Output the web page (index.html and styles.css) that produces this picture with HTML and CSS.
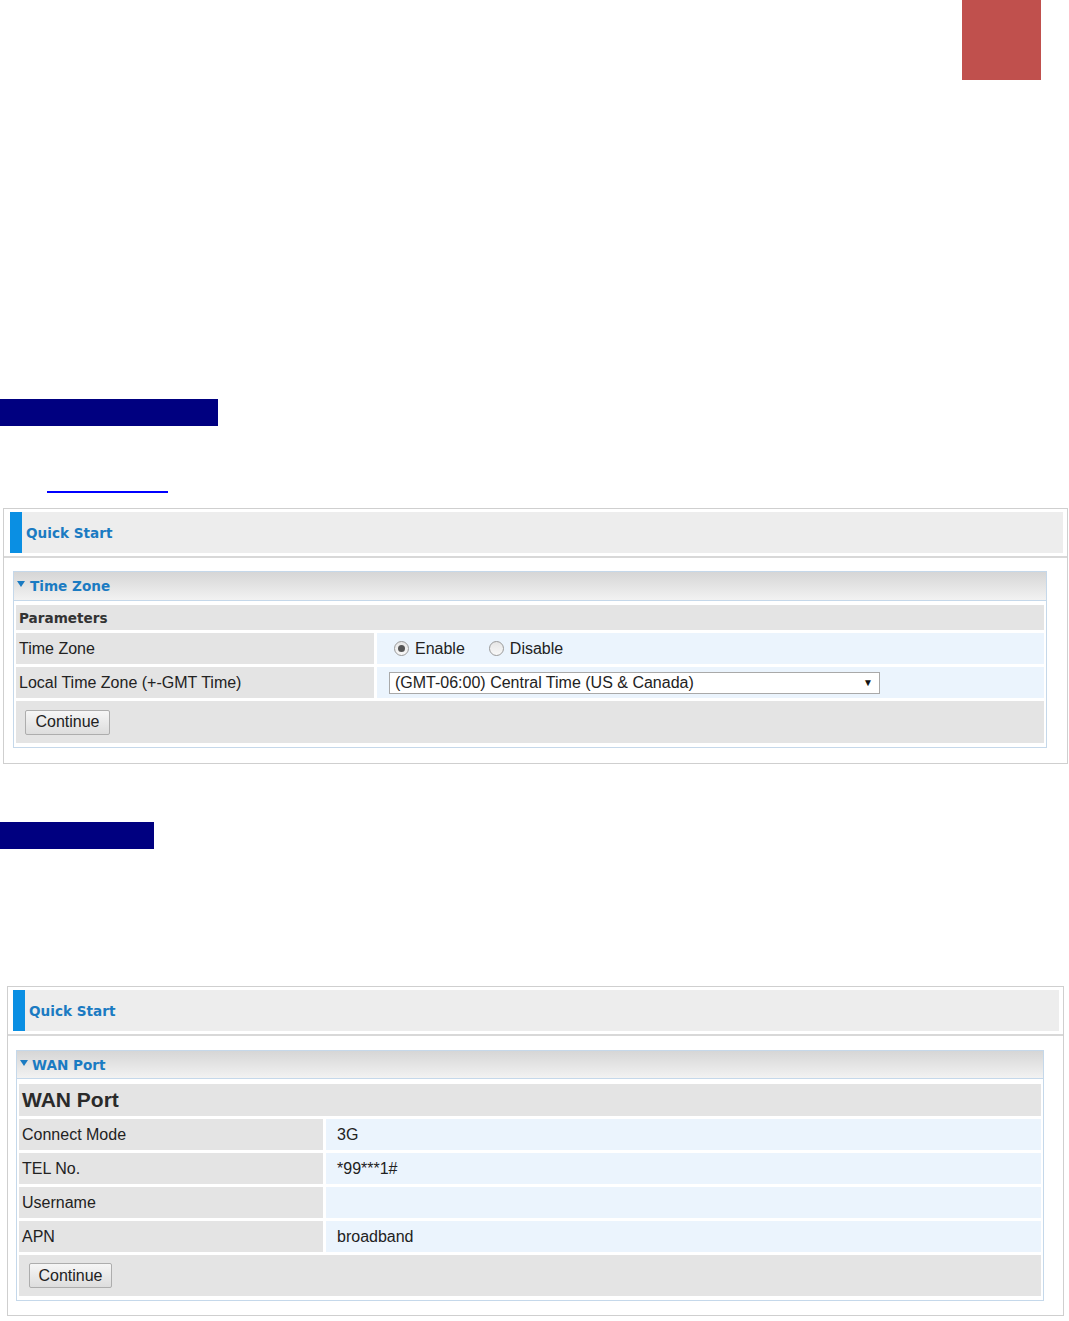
FILE: index.html
```html
<!DOCTYPE html>
<html>
<head>
<meta charset="utf-8">
<link rel="stylesheet" href="styles.css">
</head>
<body>
<div class="red-tab"></div>
<div class="navy-bar navy-1"></div>
<div class="link-line"></div>

<div class="panel panel-1">
  <div class="panel-head"><div class="qs-bar">Quick Start</div></div>
  <div class="panel-body">
    <div class="section">
      <div class="section-head"><span class="tri"></span>Time Zone</div>
      <div class="section-body">
        <div class="grid grid-tz">
          <div class="cell params">Parameters</div>
          <div class="cell label">Time Zone</div>
          <div class="cell value">
            <span class="radio checked"></span><span class="radio-text">Enable</span>
            <span class="radio"></span><span class="radio-text">Disable</span>
          </div>
          <div class="cell label">Local Time Zone (+-GMT Time)</div>
          <div class="cell value">
            <div class="select"><span>(GMT-06:00) Central Time (US &amp; Canada)</span><span class="arrow">▼</span></div>
          </div>
          <div class="cell action"><button class="btn">Continue</button></div>
        </div>
      </div>
    </div>
  </div>
</div>

<div class="navy-bar navy-2"></div>

<div class="panel panel-2">
  <div class="panel-head"><div class="qs-bar">Quick Start</div></div>
  <div class="panel-body">
    <div class="section">
      <div class="section-head"><span class="tri"></span>WAN Port</div>
      <div class="section-body">
        <div class="grid grid-wan">
          <div class="cell title">WAN Port</div>
          <div class="cell label">Connect Mode</div>
          <div class="cell value v2">3G</div>
          <div class="cell label">TEL No.</div>
          <div class="cell value v2">*99***1#</div>
          <div class="cell label">Username</div>
          <div class="cell value v2"></div>
          <div class="cell label">APN</div>
          <div class="cell value v2">broadband</div>
          <div class="cell action"><button class="btn">Continue</button></div>
        </div>
      </div>
    </div>
  </div>
</div>
</body>
</html>
```

FILE: styles.css
```css
html, body {
  margin: 0;
  padding: 0;
  background: #ffffff;
}
body {
  font-family: "Liberation Sans", Arial, sans-serif;
  color: #222;
}
.red-tab {
  margin-left: 962px;
  width: 79px;
  height: 80px;
  background: #c0504d;
}
.navy-bar {
  background: #000080;
  height: 27px;
}
.navy-1 {
  margin-top: 319px;
  width: 218px;
}
.link-line {
  margin-top: 65px;
  margin-left: 47px;
  width: 121px;
  height: 0;
  border-bottom: 2px solid #0000ff;
}
.panel {
  border: 1px solid #cfcfcf;
  box-sizing: border-box;
}
.panel-1 {
  margin-top: 15px;
  margin-left: 3px;
  width: 1065px;
}
.navy-2 {
  margin-top: 58px;
  width: 154px;
}
.panel-2 {
  margin-top: 137px;
  margin-left: 7px;
  width: 1057px;
}
.panel-head {
  padding: 3px 4px 3px 6px;
  border-bottom: 2px solid #d8d8d8;
}
.panel-2 .panel-head {
  padding-left: 5px;
}
.qs-bar {
  height: 41px;
  background: #ededed;
  border-left: 12px solid #0a8fe3;
  padding-left: 4px;
  display: flex;
  align-items: center;
  font-family: "DejaVu Sans", Verdana, sans-serif;
  font-weight: bold;
  font-size: 13.6px;
  color: #1b7bc2;
}
.panel-body {
  padding: 13px 20px 15px 9px;
}
.panel-2 .panel-body {
  padding: 14px 19px 14px 8px;
}
.section {
  border: 1px solid #c5d8ea;
}
.section-head {
  height: 28px;
  border-bottom: 1px solid #c5d8ea;
  background: linear-gradient(#d6d6d6, #f2f2f2);
  display: flex;
  align-items: center;
  padding-left: 3px;
  font-family: "DejaVu Sans", Verdana, sans-serif;
  font-weight: bold;
  font-size: 13.6px;
  color: #1b7bc2;
}
.panel-2 .section-head {
  height: 27px;
}
.tri {
  width: 0;
  height: 0;
  border-left: 4px solid transparent;
  border-right: 4px solid transparent;
  border-top: 6px solid #1b7bc2;
  margin-right: 5px;
  margin-top: -4px;
}
.panel-2 .tri {
  margin-right: 4px;
}
.section-body {
  padding: 4px 2px 4px 2px;
}
.panel-2 .section-body {
  padding: 5px 2px 4px 2px;
}
.grid {
  display: grid;
  gap: 3px;
}
.grid-tz {
  grid-template-columns: 358px 1fr;
  grid-template-rows: 25px 31px 31px 42px;
}
.grid-wan {
  grid-template-columns: 304px 1fr;
  grid-template-rows: 32px 31px 31px 31px 31px 41px;
}
.cell {
  display: flex;
  align-items: center;
  font-size: 16px;
}
.params {
  grid-column: 1 / 3;
  background: #e4e4e4;
  padding-left: 3px;
  font-family: "DejaVu Sans", Verdana, sans-serif;
  font-weight: bold;
  font-size: 13.6px;
  color: #333;
}
.title {
  grid-column: 1 / 3;
  background: #e4e4e4;
  padding-left: 3px;
  font-weight: bold;
  font-size: 21px;
  color: #2a2a2a;
}
.label {
  background: #e4e4e4;
  padding-left: 3px;
}
.value {
  background: #ebf4fd;
  padding-left: 17px;
}
.v2 {
  padding-left: 11px;
}
.action {
  grid-column: 1 / 3;
  background: #e4e4e4;
  padding-left: 9px;
}
.panel-2 .action {
  padding-left: 10px;
}
.radio {
  width: 13px;
  height: 13px;
  border: 1px solid #9a9a9a;
  border-radius: 50%;
  background: linear-gradient(#e6e6e6, #f8f8f8);
  box-sizing: content-box;
  display: inline-flex;
  align-items: center;
  justify-content: center;
  margin-right: 6px;
}
.radio.checked::after {
  content: "";
  width: 7px;
  height: 7px;
  border-radius: 50%;
  background: #555;
}
.radio-text {
  margin-right: 24px;
}
.value .select {
  margin-left: -5px;
}
.select {
  width: 491px;
  height: 22px;
  box-sizing: border-box;
  border: 1px solid #a9a9a9;
  background: #fff;
  display: flex;
  align-items: center;
  justify-content: space-between;
  padding: 0 6px 0 5px;
  font-size: 16px;
}
.arrow {
  font-size: 10px;
  color: #111;
}
.btn {
  width: 85px;
  height: 25px;
  border: 1px solid #adadad;
  border-radius: 2px;
  background: linear-gradient(#f6f6f6, #dddddd);
  font-family: "Liberation Sans", Arial, sans-serif;
  font-size: 16px;
  color: #222;
  padding: 0;
}
.panel-2 .btn {
  width: 83px;
}
```
